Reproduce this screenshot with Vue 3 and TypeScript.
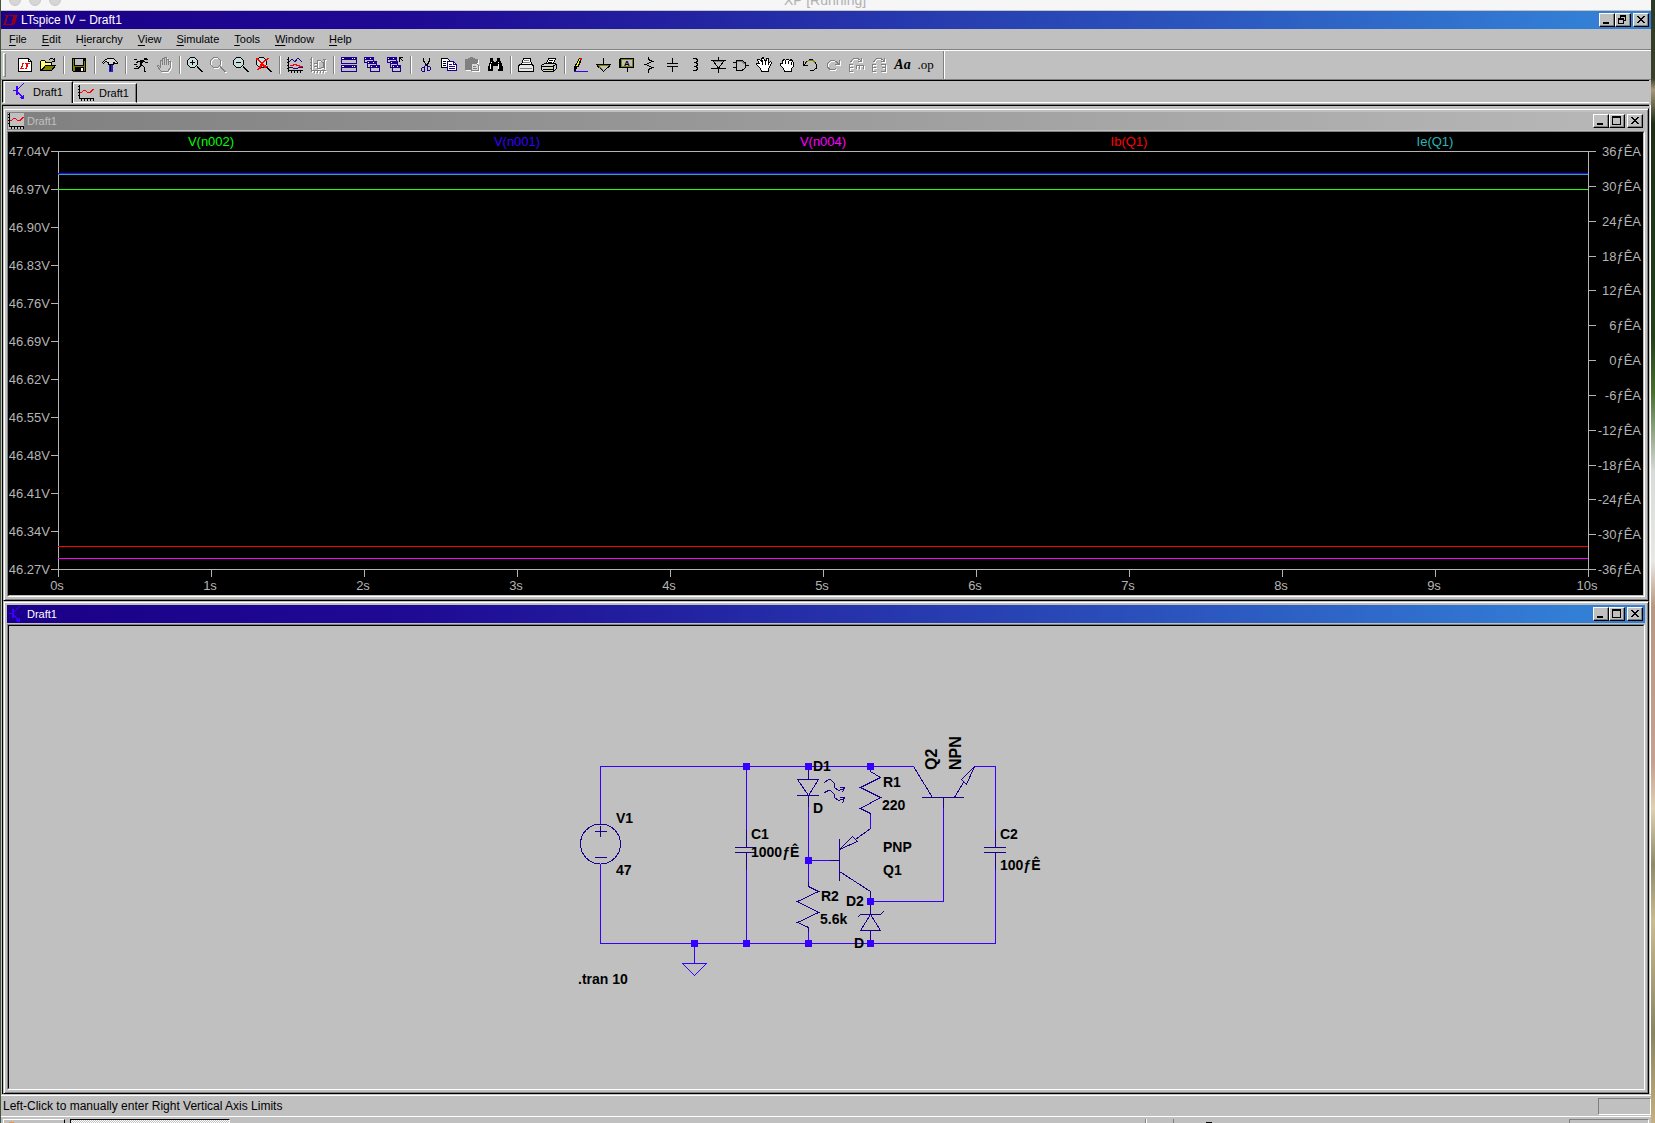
<script setup lang="ts">
type Shape = { d: string; s?: string; f?: string }
type Tool = { name: string; shapes?: Shape[]; label?: string; disabled?: boolean; glyph?: string }

const K = '#000'
const N = '#1c008c'
const W = '#fff'
const O = '#808000'
const G = '#808080'

const zoomBase: Shape[] = [
  { d: 'M3 1h5l3 3v4l-3 3H3L0 8V4z', f: '#c8dede' },
  { d: 'M3.5 0.5H7.5L10.5 3.5V7.5L7.5 10.5H3.5L0.5 7.5V3.5Z', s: K },
  { d: 'M10 9h1v1h1v1h1v1h1v1h1v1h1v1h-2v-1h-1v-1h-1v-1h-1v-1h-1z', f: K },
]
const plotAxes = 'M1.5 0V14.5M0 2.5H2M0 5.5H2M0 8.5H2M0 11.5H2M1 13.5H16M4.5 14V16M7.5 14V16M10.5 14V16M13.5 14V16'

const waveIcon: Shape[] = [
  { d: 'M1.5 0V13.5H16M0 1.5H2M0 4.5H2M0 7.5H2M0 10.5H2M3.5 14V16M6.5 14V16M9.5 14V16M12.5 14V16M15.5 14V16', s: K },
  { d: 'M3 7h1v-1h1v-1h3v1h1v1h3v-1h1v-1h1v-1h2v1h-1v1h-1v1h-1v1H9v-1H8v-1H5v1H4v1H2V7z', f: '#f00' },
]
const bjtIcon: Shape[] = [
  { d: 'M1 7h3V3h2v9H4V8H1zM6 5h1V4h1V3h1V2h1V1h1V0h1v1h-1v1h-1v1H9v1H8v1H7v1H6zM6 9h1v1h1v1h1v1h1v1h1v-1h1v4H9v-1H8v-1h1v-1H8v-1H7v-1H6z', f: '#3b00ff' },
]

const groups: Tool[][] = [
  [
    {
      name: 'New Schematic',
      shapes: [
        { d: 'M1.5 1.5H11.5L14.5 4.5V14.5H1.5Z', s: K, f: W },
        { d: 'M11.5 1.5V4.5H14.5', s: K },
        { d: 'M5 6h2v1H6v3H5v1h2v1H3v-1h1V9h1zM8 6h5v1h-2v3h-1v2H8v-1h1V7H8z', f: '#f00' },
      ],
    },
    {
      name: 'Open',
      shapes: [
        { d: 'M0.5 13.5V4.5L2 3.5H4.5L6 5.5H11.5V8.5H5.5Z', s: K, f: '#ffff70' },
        { d: 'M1.5 13.5L5.5 8.5H15.5L11.5 13.5Z', s: K, f: O },
        { d: 'M9 2.5H10M10 1.5H13M13 2.5H14M14.5 1V5M12 4.5H15', s: K },
      ],
    },
  ],
  [
    {
      name: 'Save',
      shapes: [
        { d: 'M1.5 1.5H14.5V14.5H2.5L1.5 13.5Z', s: K, f: O },
        { d: 'M4 2h8v6H4z', f: '#c0c0c0' },
        { d: 'M3.5 2V8.5H12.5V2M13.5 2V4', s: K },
        { d: 'M4 10h9v5H4z', f: K },
        { d: 'M10 11h2v3h-2z', f: W },
      ],
    },
  ],
  [
    {
      name: 'Control Panel',
      shapes: [
        { d: 'M0.5 5.5L3.5 2.5L6.5 1.5H11.5L15.5 5.5V6.5H13.5L11.5 5.5V7.5H6.5V5.5L3.5 4.5L1.5 6.5Z', s: K, f: '#d8d8d8' },
        { d: 'M7 8h4v7H7z', f: '#2a20d0' },
        { d: 'M8 8h1v6H8z', f: K },
      ],
    },
  ],
  [
    {
      name: 'Run',
      shapes: [
        { d: 'M11 1h3v2h-3zM7 3h4v1h1v1h-2v1H9v2h1v1h1v1h1v4h1v1h-2v-5h-1v-1H8v1H7v1H6v1H1v-1h4v-1h1V9h1V5H5v1H3V5h1V4h3zM12 5h3v1h-3z', f: K },
        { d: 'M1 2.5H4M1 7.5H4M3 9.5H5M13 2.5H15', s: K },
      ],
    },
    {
      name: 'Halt',
      disabled: true,
      shapes: [
        { d: 'M5 14L1 9L2 8L4 10V3H6V1H8V0H10V2H12V4H14V11L12 14Z', f: '#c8c8c8', s: G },
        { d: 'M6.5 3V8M8.5 1V8M10.5 2V8M12.5 4V8', s: G },
      ],
    },
  ],
  [
    { name: 'Zoom to rectangle', shapes: [...zoomBase, { d: 'M3 5.5H8M5.5 3V8', s: K }] },
    { name: 'Pan', disabled: true, shapes: zoomBase.slice(1) },
    { name: 'Zoom back', shapes: [...zoomBase, { d: 'M3 5.5H8', s: K }] },
    {
      name: 'Zoom full extents',
      shapes: [...zoomBase, { d: 'M0 1h2v1h1v1h1v1h1v1h2V4h1V3h2V2h1V1h2v1h-1v1h-1v1h-2v1H8v1H7v1h1v1h2v1h2v1h-2v1H8v-1H7V9H6v1H5v2H3v1H1v-1h1v-1h1V9h1V7h1V6H4V5H3V4H2V3H0z', f: '#f00' }],
    },
  ],
  [
    {
      name: 'Autorange Y-axis',
      shapes: [
        { d: plotAxes, s: K },
        { d: 'M2 5L5 2L8 5L11 1L15 5', s: N },
        { d: 'M3 8h3v-1h3v1h3v1h4', s: '#f00' },
        { d: 'M2 10.5H6M6 11.5H11M11 10.5H16', s: N },
      ],
    },
    {
      name: 'Mark Data Points',
      disabled: true,
      shapes: [
        { d: plotAxes, s: G },
        { d: 'M4 6.5H7M4 9.5H7M7.5 3.5H10L13.5 6V10L10 11.5H7.5ZM13 2.5H16M14.5 3V12', s: G },
      ],
    },
  ],
  [
    {
      name: 'Tile windows',
      shapes: [
        { d: 'M0.5 0.5H15.5V6.5H0.5ZM0.5 8.5H15.5V14.5H0.5Z', s: N, f: '#c0c0c0' },
        { d: 'M0 0h16v3H0zM0 8h16v3H0z', f: N },
        { d: 'M1 1.5H3M11 1.5H12M13 1.5H14M1 9.5H3M11 9.5H12M13 9.5H14', s: W },
      ],
    },
    {
      name: 'Cascade windows',
      shapes: [
        { d: 'M0.5 0.5H9.5V5.5H0.5Z', s: N, f: '#c8c8c8' }, { d: 'M0 0h10v3H0z', f: N },
        { d: 'M3.5 4.5H12.5V10.5H3.5Z', s: N, f: '#c8c8c8' }, { d: 'M3 4h10v3H3z', f: N },
        { d: 'M6.5 8.5H15.5V14.5H6.5Z', s: N, f: '#c8c8c8' }, { d: 'M6 8h10v3H6z', f: N },
        { d: 'M1 1.5H2M6 1.5H7M4 5.5H5M9 5.5H10M7 9.5H8M12 9.5H13', s: W },
      ],
    },
    {
      name: 'Close all windows',
      shapes: [
        { d: 'M0.5 0.5H9.5V5.5H0.5Z', s: N, f: '#c8c8c8' }, { d: 'M0 0h9v3H0z', f: N },
        { d: 'M3.5 4.5H10.5V10.5H3.5Z', s: N, f: '#c8c8c8' }, { d: 'M3 4h8v3H3z', f: N },
        { d: 'M5.5 8.5H13.5V14.5H5.5Z', s: N, f: '#c8c8c8' }, { d: 'M5 8h9v3H5z', f: N },
        { d: 'M1 1.5H2M6 1.5H7M4 5.5H5M6 9.5H7M10 9.5H11', s: W },
        { d: 'M12.5 5V0.5H16M13 1L16 4', s: K },
      ],
    },
  ],
  [
    {
      name: 'Cut',
      shapes: [
        { d: 'M5 1h1v3h1v2h1v1h1V6h1V4h1V1h1v4h-1v2h-1v2H8V8H7V6H6V5H5z', f: K },
        { d: 'M7.5 8L6.5 10H4.5L3.5 11.5V13.5L5 14.5H6.5V10M8.5 8L9.5 9.5H11.5L12.5 11V12.5L11.5 13.5H9.5V9.5', s: N },
      ],
    },
    {
      name: 'Copy',
      shapes: [
        { d: 'M0.5 1.5H6.5L8.5 3.5V10.5H0.5Z', s: K, f: W },
        { d: 'M2 4.5H5M2 6.5H5M2 8.5H5', s: K },
        { d: 'M6.5 4.5H12.5L15.5 7.5V13.5H6.5Z', s: N, f: W },
        { d: 'M12.5 4.5V7.5H15M8 7.5H11M8 9.5H14M8 11.5H14', s: N },
      ],
    },
    {
      name: 'Paste',
      disabled: true,
      shapes: [
        { d: 'M1 2h3V1h2V0h3v1h2v1h3v4H7v7H1z', f: G },
        { d: 'M7.5 6.5H12.5L14.5 8.5V13.5H7.5Z', s: G, f: '#d8d8d8' },
        { d: 'M9 9.5H12M9 11.5H13', s: G },
      ],
    },
    {
      name: 'Find',
      shapes: [
        { d: 'M3 1h3v3h1v1h2V4h1V1h3v3h1v2h1v3h1v5h-5V9H6v5H1V9h1V6h1z', f: K },
        { d: 'M4 5.5H5M11 5.5H12M3.5 7V12M11.5 7V12', s: W },
      ],
    },
  ],
  [
    {
      name: 'Print Setup',
      shapes: [
        { d: 'M3.5 7.5L5.5 1.5H12.5L13.5 7.5', s: K, f: W },
        { d: 'M1.5 7.5H14.5L15.5 9.5V14.5H0.5V9.5Z', s: K, f: '#e8e8e8' },
        { d: 'M6 3.5H11M5 5.5H12', s: G },
        { d: 'M2 11.5H14', s: G },
      ],
    },
    {
      name: 'Print',
      shapes: [
        { d: 'M5.5 6.5L7.5 1.5H14.5L12.5 6.5', s: K, f: W },
        { d: 'M0.5 8.5L3.5 6.5H14.5L15.5 7.5V11.5L12.5 14.5H2.5L0.5 12.5Z', s: K, f: '#d0d0d0' },
        { d: 'M1 9.5H12L15 7M2 12.5H12M8 3.5H12M7 5.5H11M12.5 10V14', s: K },
        { d: 'M7 11.5H10', s: '#e0e000' },
      ],
    },
  ],
  [
    {
      name: 'Draw Wire',
      shapes: [
        { d: 'M2 14.5H16', s: '#3600ff' },
        { d: 'M4 6h1V4h1V2h1V1h3v2H9v3H8v2H7v2H5v2H4v2H2V9h1V7h1z', f: K },
        { d: 'M5 6h1V4h1V2h1v2H7v3H6v2H4V8h1z', f: '#ff0' },
        { d: 'M8 1h2v2H8z', f: '#f00' },
      ],
    },
    {
      name: 'Ground',
      shapes: [{ d: 'M8.5 1V8', s: K }, { d: 'M1 7.5H16M2 8.5L8.5 14.5L15 8.5', s: K }, { d: 'M3 8.5H14M4 9.5L8.5 13.5', s: O }],
    },
    {
      name: 'Label Net',
      glyph: 'A',
      shapes: [{ d: 'M2.5 1.5H15.5V10.5H2.5ZM1 2.5H2V10H1ZM9.5 11V15', s: K }, { d: 'M3.5 2.5H14.5V9.5H3.5Z', s: O }],
    },
    { name: 'Resistor', shapes: [{ d: 'M7.5 0V2.5L11.5 4.5L4.5 7.5L11.5 10.5L7.5 12.5V16', s: K }] },
    { name: 'Capacitor', shapes: [{ d: 'M8.5 1V7M3 6.5H14M3 9.5H14M8.5 10V15', s: K }] },
    { name: 'Inductor', shapes: [{ d: 'M6 1.5H9.5L10.5 3.5L9.5 5.5H7M9.5 5.5L10.5 7.5L9.5 9.5H7M9.5 9.5L10.5 11.5L9.5 13.5H6', s: K }] },
    { name: 'Diode', shapes: [{ d: 'M8.5 0V4M1 3.5H16M3 4L8.5 11L14 4M1 11.5H16M8.5 11V16', s: K }, { d: 'M4 4.5H13', s: G }] },
    { name: 'Component', shapes: [{ d: 'M0 5.5H4M0 10.5H4M12 8.5H16', s: K }, { d: 'M3.5 3.5H9L12.5 6V10.5L9 13.5H3.5Z', s: K }, { d: 'M4 4.5H9L11.5 7', s: G }] },
    {
      name: 'Move',
      shapes: [
        { d: 'M4.5 11.5L0.5 7.5V6.5H3.5L1.5 3.5V2.5H3.5L6.5 5.5L5.5 1.5L7.5 0.5L9.5 5.5L10.5 1.5H12.5V6.5L14.5 4.5L15.5 5.5L12.5 12.5V14.5H5.5Z', s: K, f: W },
        { d: 'M6.5 5V8M9.5 5V8M12.5 6V8', s: K },
      ],
    },
    {
      name: 'Drag',
      shapes: [
        { d: 'M4.5 11.5L1.5 8.5V6.5H3.5V3.5L5.5 2.5L6.5 3.5L7.5 2.5H9.5L10.5 3.5L12.5 2.5L13.5 4.5L14.5 5.5V9.5L12.5 11.5V14.5H5.5Z', s: K, f: W },
        { d: 'M6.5 4V7M9.5 4V7M12.5 5V8', s: K },
      ],
    },
    {
      name: 'Undo',
      shapes: [{ d: 'M1.5 4V8.5H6M2 8L5 4.5L8 2.5H11', s: K }, { d: 'M4 5.5L7 3.5H11L13.5 6', s: O }, { d: 'M13.5 5.5L14.5 8V11L11.5 13.5H8', s: K }],
    },
    {
      name: 'Redo',
      disabled: true,
      shapes: [{ d: 'M14.5 3V7.5H10M13.5 7L11 4.5L9 3.5H5.5L2.5 6.5V10L5 12.5H8.5L11 11.5', s: G }],
    },
    {
      name: 'Rotate',
      disabled: true,
      shapes: [{ d: 'M2.5 5L5.5 1.5H10L13 4M13.5 1V4.5H10M5 7.5H1.5V14.5H5M2 10.5H5M8 12V8.5H15.5V12M11.5 9V12', s: G }],
    },
    {
      name: 'Mirror',
      disabled: true,
      shapes: [{ d: 'M2.5 5L5.5 1.5H10L13 4M13.5 1V4.5H10M5 7.5H1.5V14.5H5M2 10.5H5M10 7.5H14.5V14.5H10M11 10.5H14', s: G }],
    },
    { name: 'Text', label: 'Aa' },
    { name: 'SPICE Directive', label: '.op' },
  ],
]

const menus = [
  ['', 'F', 'ile'], ['', 'E', 'dit'], ['H', 'i', 'erarchy'], ['', 'V', 'iew'],
  ['', 'S', 'imulate'], ['', 'T', 'ools'], ['', 'W', 'indow'], ['', 'H', 'elp'],
]

const plot = { left: 58, right: 1588, top: 151, bottom: 569 }
const step = (from: number, to: number, n: number, i: number) => Math.round(from + ((to - from) * i) / n)
const volts = Array.from({ length: 12 }, (_, i) => ({ y: step(plot.top, plot.bottom, 11, i), t: (47.04 - i * 0.07).toFixed(2) + 'V' }))
const amps = Array.from({ length: 13 }, (_, i) => ({ y: step(plot.top, plot.bottom, 12, i), t: 36 - i * 6 + 'ƒÊA' }))
const secs = Array.from({ length: 11 }, (_, i) => ({ x: step(plot.left, plot.right, 10, i), t: i + 's' }))
const legend = [
  { t: 'V(n002)', c: '#00ff00' }, { t: 'V(n001)', c: '#3600ff' }, { t: 'V(n004)', c: '#ff00ff' },
  { t: 'Ib(Q1)', c: '#ff0000' }, { t: 'Ie(Q1)', c: '#2ab5b5' },
].map((l, i) => ({ ...l, x: plot.left + 153 + i * 306 }))
const traces = [
  { y: 173, c: '#3600ff' }, { y: 174, c: '#2aa5c0' }, { y: 189, c: '#20ff00' },
  { y: 546, c: '#ff0000' }, { y: 558, c: '#ff00ff' },
]

const wires = [
  'M600.5 824V766.5H913.5M974.5 766.5H995.5V830M995.5 870V943.5H600.5V864',
  'M746.5 766V830M746.5 870V943M808.5 807V882M808.5 932V943M808.5 860.5H830',
  'M870.5 815V828M870.5 901.5H943.5V808M694.5 943V963M682.5 963.5H706.5L694.5 975.5Z',
]
const parts = [
  'M595 831.5H607M600.5 826V837M595 857.5H607M600.5 819V824M600.5 864V870',
  'M746.5 829V847M735 847.5H756M735 852.5H756M746.5 853V870',
  'M995.5 829V847M984 847.5H1006M984 852.5H1006M995.5 853V870',
  'M808.5 770V779.5M797.5 779.5H818.5L808.5 795.5ZM797 795.5H819M808.5 795V807',
  'M808.5 881V886.5L818.5 891.5L797.5 901.5L818.5 912.5L797.5 922.5L808.5 927.5V932',
  'M870.5 767V771.5L880.5 777.5L860.5 787.5L880.5 797.5L860.5 808.5L870.5 813.5V828.5L855.5 839.5',
  'M839.5 849.5L852.5 836.5L857.5 841.5ZM839.5 839V881M830 860.5H839M839.5 871.5L870.5 891.5V901',
  'M870.5 901V914.5L860.5 930.5H880.5L870.5 914.5M857.5 917.5L860.5 914.5H880.5L883.5 911.5M870.5 930V943',
  'M913.5 766.5L932.5 797.5M922 797.5H964M954.5 797.5L963.5 782.5M974.5 766.5L961.5 779.5L966.5 784.5ZM943.5 797V808',
  'M824.5 782.5L828.5 779.5H830.5L834.5 783.5V787.5L838.5 790.5L844.5 788.5M839.5 787.5H844.5L842.5 792.5',
  'M824.5 792.5L828.5 790.5H830.5L834.5 794.5V797.5L838.5 800.5L844.5 798.5M839.5 797.5H844.5L842.5 803.5',
]
const nodes = [[746, 766], [808, 766], [870, 766], [808, 860], [870, 901], [694, 943], [746, 943], [808, 943], [870, 943]]
const labels: [number, number, string][] = [
  [616, 823, 'V1'], [616, 875, '47'], [751, 839, 'C1'], [751, 857, '1000ƒÊ'], [813, 771, 'D1'], [813, 813, 'D'],
  [883, 787, 'R1'], [882, 810, '220'], [883, 852, 'PNP'], [883, 875, 'Q1'], [821, 901, 'R2'], [820, 924, '5.6k'],
  [846, 906, 'D2'], [854, 948, 'D'], [1000, 839, 'C2'], [1000, 870, '100ƒÊ'], [578, 984, '.tran 10'],
]
</script>

<template>
  <div class="desktop">
    <main class="guest">
      <div class="host-bar">
        <div class="host-inner">
          <span class="light"></span><span class="light"></span><span class="light"></span>
          <span class="host-title">XP [Running]</span>
        </div>
      </div>

      <header class="title active app-title">
        <svg class="logo" width="16" height="16" viewBox="0 0 16 16" aria-hidden="true">
          <path d="M2 3h4v1H5v2H4v4H3v2h3v1H0v-1h1v-2h1V6h1V4H2zM7 3h8v1h-1v2h-1v4h-1v2h-1v1H6v-1h2v-1h1V7h1V4H7z" fill="#900018" />
        </svg>
        <h1>LTspice IV − Draft1</h1>
        <div class="controls">
          <button type="button" aria-label="Minimize"><svg width="12" height="10" viewBox="0 0 12 10"><path d="M2 7h6v2H2z" /></svg></button>
          <button type="button" aria-label="Restore"><svg width="12" height="10" viewBox="0 0 12 10"><path d="M3 0h6v6H7v3H1V3h2zM4 2v1h3v2h1V2zM2 5v3h4V5z" fill-rule="evenodd" /></svg></button>
          <button type="button" aria-label="Close" class="close"><svg width="12" height="10" viewBox="0 0 12 10"><path d="M2 1h2v1h1v1h2V2h1V1h2v1H9v1H8v1H7v1h1v1h1v1h1v1H8V7H7V6H5v1H4v1H2V7h1V6h1V5h1V4H4V3H3V2H2z" /></svg></button>
        </div>
      </header>

      <nav class="menu" aria-label="Main menu">
        <button v-for="m in menus" :key="m.join('')" type="button">{{ m[0] }}<u>{{ m[1] }}</u>{{ m[2] }}</button>
      </nav>

      <div class="toolbar" role="toolbar" aria-label="Tools">
        <span class="grip"></span>
        <template v-for="(g, gi) in groups" :key="gi">
          <span v-if="gi" class="sep"></span>
          <button v-for="t in g" :key="t.name" type="button" class="tool" :disabled="t.disabled" :aria-label="t.name">
            <span v-if="t.label" class="script" :class="{ op: t.label === '.op' }">{{ t.label }}</span>
            <svg v-else width="17" height="17" viewBox="0 0 17 17">
              <g v-if="t.disabled" transform="translate(1 1)">
                <path v-for="(p, i) in t.shapes" :key="i" :d="p.d" :stroke="p.s ? '#fff' : 'none'" :fill="p.f && !p.s ? '#fff' : 'none'" />
              </g>
              <path
                v-for="(p, i) in t.shapes" :key="i" :d="p.d"
                :stroke="p.s ? (t.disabled ? '#808080' : p.s) : 'none'"
                :fill="t.disabled && p.f === '#000' ? '#808080' : p.f || 'none'"
              />
              <text v-if="t.glyph" x="9" y="9" class="glyph">{{ t.glyph }}</text>
            </svg>
          </button>
        </template>
        <span class="bar-end"></span>
      </div>

      <div class="tabs" role="tablist">
        <button type="button" role="tab" aria-selected="true" class="tab current">
          <svg width="16" height="17" viewBox="0 0 16 17"><path v-for="(p, i) in bjtIcon" :key="i" :d="p.d" :fill="p.f" /></svg>Draft1
        </button>
        <button type="button" role="tab" aria-selected="false" class="tab">
          <svg width="16" height="16" viewBox="0 0 16 16"><path v-for="(p, i) in waveIcon" :key="i" :d="p.d" :stroke="p.s || 'none'" :fill="p.f || 'none'" /></svg>Draft1
        </button>
      </div>

      <div class="mdi">
        <section class="child" aria-label="Waveform">
          <header class="title inactive">
            <svg class="lit" width="16" height="16" viewBox="0 0 16 16"><path v-for="(p, i) in waveIcon" :key="i" :d="p.d" :stroke="p.s || 'none'" :fill="p.f || 'none'" /></svg>
            <h2>Draft1</h2>
            <div class="controls">
              <button type="button" aria-label="Minimize"><svg width="12" height="10" viewBox="0 0 12 10"><path d="M2 7h6v2H2z" /></svg></button>
              <button type="button" aria-label="Maximize"><svg width="12" height="10" viewBox="0 0 12 10"><path d="M1 0h9v9H1zM2 2v6h7V2z" fill-rule="evenodd" /></svg></button>
              <button type="button" aria-label="Close" class="close"><svg width="12" height="10" viewBox="0 0 12 10"><path d="M2 1h2v1h1v1h2V2h1V1h2v1H9v1H8v1H7v1h1v1h1v1h1v1H8V7H7V6H5v1H4v1H2V7h1V6h1V5h1V4H4V3H3V2H2z" /></svg></button>
            </div>
          </header>
          <div class="client dark">
            <svg class="sheet" viewBox="9 133 1634 462" role="img" aria-label="Waveform plot">
              <path
                :d="`M${plot.left + 0.5} ${plot.top}V${plot.bottom + 7}M${plot.right + 0.5} ${plot.top}V${plot.bottom + 7}M${plot.left} ${plot.top + 0.5}H${plot.right}M${plot.left} ${plot.bottom + 0.5}H${plot.right}`"
                class="axis"
              />
              <g v-for="v in volts" :key="v.t">
                <path :d="`M51 ${v.y + 0.5}H58`" class="axis" />
                <text x="50" :y="v.y + 5" text-anchor="end" class="tick">{{ v.t }}</text>
              </g>
              <g v-for="a in amps" :key="a.t">
                <path :d="`M1588 ${a.y + 0.5}H1596`" class="axis" />
                <text x="1641" :y="a.y + 5" text-anchor="end" class="tick">{{ a.t }}</text>
              </g>
              <g v-for="s in secs" :key="s.t">
                <path :d="`M${s.x + 0.5} 570V577`" class="axis" />
                <text :x="s.x - 1" y="590" text-anchor="middle" class="tick">{{ s.t }}</text>
              </g>
              <text v-for="l in legend" :key="l.t" :x="l.x" y="146" text-anchor="middle" class="legend" :fill="l.c">{{ l.t }}</text>
              <path v-for="t in traces" :key="t.y" :d="`M${plot.left} ${t.y + 0.5}H${plot.right}`" :stroke="t.c" />
            </svg>
          </div>
        </section>

        <section class="child" aria-label="Schematic">
          <header class="title active">
            <svg width="16" height="17" viewBox="0 0 16 17"><path v-for="(p, i) in bjtIcon" :key="i" :d="p.d" :fill="p.f" /></svg>
            <h2>Draft1</h2>
            <div class="controls">
              <button type="button" aria-label="Minimize"><svg width="12" height="10" viewBox="0 0 12 10"><path d="M2 7h6v2H2z" /></svg></button>
              <button type="button" aria-label="Maximize"><svg width="12" height="10" viewBox="0 0 12 10"><path d="M1 0h9v9H1zM2 2v6h7V2z" fill-rule="evenodd" /></svg></button>
              <button type="button" aria-label="Close" class="close"><svg width="12" height="10" viewBox="0 0 12 10"><path d="M2 1h2v1h1v1h2V2h1V1h2v1H9v1H8v1H7v1h1v1h1v1h1v1H8V7H7V6H5v1H4v1H2V7h1V6h1V5h1V4H4V3H3V2H2z" /></svg></button>
            </div>
          </header>
          <div class="client">
            <svg class="sheet" viewBox="9 626 1634 462" role="img" aria-label="Circuit schematic">
              <path v-for="p in parts" :key="p" :d="p" class="part" />
              <circle cx="600.5" cy="844" r="20" class="part" />
              <path v-for="w in wires" :key="w" :d="w" class="wire" />
              <rect v-for="n in nodes" :key="n.join()" :x="n[0] - 3" :y="n[1] - 3" width="7" height="7" fill="#3600ff" />
              <text v-for="l in labels" :key="l[0] + '-' + l[1]" :x="l[0]" :y="l[1]" class="name">{{ l[2] }}</text>
              <text transform="translate(937 770) rotate(-90)" class="name turned">Q2</text>
              <text transform="translate(961 770) rotate(-90)" class="name turned">NPN</text>
            </svg>
          </div>
        </section>
      </div>

      <footer class="status">
        <span>Left-Click to manually enter Right Vertical Axis Limits</span>
        <span class="pane"></span>
      </footer>
      <div class="taskbar">
        <span class="start"><i></i></span>
        <span class="task"></span>
        <span class="divider"></span>
        <span class="ime"><i></i></span>
        <span class="tray"></span>
      </div>
    </main>
    <div class="wallpaper"></div>
  </div>
</template>

<style>
body {
  margin: 0;
  overflow: hidden;
  background: #c0c0c0;
}
</style>

<style scoped>
.desktop {
  display: flex;
  min-height: 100vh;
  font: 11px/14px "Liberation Sans", Arial, sans-serif;
  color: #000;
  background: #46553a;
}
.guest {
  flex: 1;
  min-width: 0;
  margin-left: 1px;
  background: #c0c0c0;
}
.wallpaper {
  width: 4px;
  background: linear-gradient(#2c3a22 0, #3b402c 7%, #a89878 8%, #1e2e18 11%, #24401a 30%, #4a7030 35%, #d8dcd8 42%, #e8e8e4 50%, #b89880 54%, #c8a090 68%, #ddd2b0 72%, #8f8a68 77%, #c8bc92 82%, #8a8560 92%, #c4b080 100%);
}
.host-bar {
  display: flex;
  align-items: flex-end;
  height: 10px;
  overflow: hidden;
  background: #f6f6f6;
  border-bottom: 1px solid #c4c4c4;
}
.host-inner {
  display: flex;
  flex: 1;
  align-items: center;
  gap: 8px;
  height: 20px;
  padding: 0 8px;
}
.light {
  width: 10px;
  height: 10px;
  border: 1px solid #c8c8c8;
  border-radius: 50%;
  background: #d6d6d6;
}
.host-title {
  flex: 1;
  padding-right: 62px;
  text-align: center;
  font: 14px/20px "Liberation Sans", Arial, sans-serif;
  color: #b0b0b0;
}
svg {
  display: block;
  flex: none;
  shape-rendering: crispEdges;
}
.title {
  display: flex;
  align-items: center;
  height: 18px;
  padding: 0 2px 0 1px;
  color: #fff;
}
.title h1,
.title h2 {
  flex: 1;
  margin: 0 0 0 3px;
  font-size: 11px;
  font-weight: 400;
  line-height: 18px;
}
.app-title {
  padding-left: 2px;
}
.app-title h1 {
  margin-left: 2px;
  font-size: 12px;
}
.active {
  background: linear-gradient(90deg, #1b0089 0, #1f0a94 25%, #2325a3 43%, #2b55bd 72%, #337fd6 96%);
}
.inactive {
  color: #c0c0c0;
  background: linear-gradient(90deg, #808080, #b8b8b8);
}
.lit {
  background: #c0c0c0;
}
.controls {
  display: flex;
}
.controls button {
  width: 16px;
  height: 14px;
  padding: 1px;
  border: 1px solid;
  border-color: #fff #000 #000 #fff;
  background: #c0c0c0;
  box-shadow: inset -1px -1px #808080;
}
.controls .close {
  margin-left: 2px;
}
button {
  padding: 0;
  border: 0;
  background: none;
  font: inherit;
  color: inherit;
}
.menu {
  display: flex;
  gap: 15px;
  height: 20px;
  padding-left: 8px;
  border-bottom: 1px solid #808080;
}
.menu u {
  text-underline-offset: 2px;
}
.toolbar {
  display: flex;
  align-items: center;
  height: 28px;
  border-top: 1px solid #fff;
  border-bottom: 1px solid #808080;
}
.grip {
  width: 1px;
  height: 22px;
  margin: 0 8px 0 2px;
  border: 1px solid;
  border-color: #fff #808080 #808080 #fff;
}
.sep {
  width: 1px;
  height: 18px;
  margin: 0 3px;
  border-left: 1px solid #808080;
  background: #fff;
}
.tool {
  display: flex;
  align-items: center;
  justify-content: center;
  width: 23px;
  height: 22px;
}
.glyph {
  font: bold 8px "Liberation Sans", Arial, sans-serif;
  text-anchor: middle;
}
.script {
  font: italic bold 14px/20px "Liberation Serif", "Times New Roman", serif;
}
.script.op {
  font: 13px/20px "Liberation Serif", "Times New Roman", serif;
}
.bar-end {
  width: 1px;
  height: 28px;
  margin-left: 6px;
  border-left: 1px solid #808080;
  background: #fff;
}
.tabs {
  display: flex;
  align-items: flex-start;
  height: 21px;
  margin: 0 2px 2px 1px;
  padding-left: 1px;
  border-top: 1px solid #000;
  border-left: 1px solid #000;
  border-bottom: 1px solid #fff;
}
.tab {
  display: flex;
  align-items: center;
  gap: 5px;
  height: 20px;
  margin-top: 2px;
  padding: 0 7px 0 4px;
  border: 1px solid;
  border-color: #fff #000 transparent #fff;
  box-shadow: inset -1px 0 #808080;
}
.tab.current {
  gap: 5px;
  height: 22px;
  margin-top: 0;
  padding: 0 9px 2px 7px;
  border-bottom: 0;
  background: #c0c0c0;
}
.mdi {
  padding-top: 2px;
  margin: 0 2px 0 1px;
  border-top: 1px solid #000;
  border-left: 1px solid #000;
  box-shadow: 0 -1px #808080, 1px 0 #c0c0c0, 2px 0 #fff;
}
.child {
  padding: 3px;
  border: 1px solid;
  border-color: #c0c0c0 #000 #000 #c0c0c0;
  box-shadow: inset 1px 1px #fff, inset -1px -1px #808080;
}
.client {
  margin-top: 1px;
  border: 1px solid;
  border-color: #808080 #fff #fff #808080;
}
.sheet {
  width: 100%;
  box-sizing: border-box;
  border: 1px solid;
  border-color: #000 #c0c0c0 #c0c0c0 #000;
}
.dark .sheet {
  background: #000;
}
.axis {
  stroke: #b4b4b4;
}
.tick,
.legend {
  font: 13px "Liberation Sans", Arial, sans-serif;
}
.tick {
  fill: #b4b4b4;
}
.wire,
.part {
  fill: none;
  stroke: #3600ff;
}
.part {
  stroke: #1c008c;
}
.name {
  font: bold 14px "Liberation Sans", Arial, sans-serif;
}
.turned {
  font-size: 16px;
}
.status {
  display: flex;
  align-items: center;
  justify-content: space-between;
  height: 20px;
  margin-top: 1px;
  padding-left: 2px;
  border-top: 1px solid #fff;
  font-size: 12px;
}
.pane {
  width: 51px;
  height: 15px;
  border: 1px solid;
  border-color: #808080 #fff #fff #808080;
}
.taskbar {
  display: flex;
  height: 4px;
  padding: 2px 2px 0;
  border-top: 1px solid #fff;
  overflow: hidden;
}
.start {
  width: 60px;
  border: solid;
  border-width: 1px 1px 0;
  border-color: #fff #000 #fff #fff;
}
.start i {
  display: block;
  width: 5px;
  height: 2px;
  margin: 2px 0 0 5px;
  background: #f09040;
}
.task {
  width: 158px;
  margin-left: 5px;
  border: solid;
  border-width: 1px 1px 0;
  border-color: #000 #fff #000 #000;
  background: repeating-conic-gradient(#fff 0 25%, #c0c0c0 0 50%) 0 0 / 2px 2px;
}
.divider {
  margin-left: auto;
  border-left: 1px solid #808080;
  border-right: 1px solid #fff;
}
.ime {
  width: 395px;
  margin-left: 26px;
  border-left: 1px solid #808080;
}
.ime i {
  display: block;
  width: 6px;
  height: 1px;
  margin: 3px 0 0 32px;
  background: #000;
}
.tray {
  width: 78px;
  border: solid;
  border-width: 1px 1px 0;
  border-color: #808080 #fff #fff #808080;
}
</style>
